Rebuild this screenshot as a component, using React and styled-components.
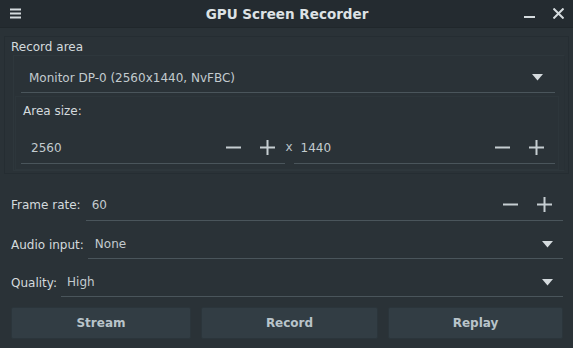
import React from "react"
import styled, { createGlobalStyle } from "styled-components"

const Global = createGlobalStyle`
  html, body {
    margin: 0;
    padding: 0;
    background: #2a3237;
  }
  body {
    font-family: "DejaVu Sans", "Liberation Sans", sans-serif;
  }
`

const Window = styled.div`
  width: 573px;
  height: 348px;
  background: #2a3237;
  color: #d4dadd;
  font-size: 12px;
  overflow: hidden;
  display: flex;
  flex-direction: column;
`

const TitleBar = styled.header`
  height: 28px;
  flex: none;
  background: #242b30;
  border-bottom: 1px solid #20272b;
  box-sizing: border-box;
  display: grid;
  grid-template-columns: 1fr auto 1fr;
  align-items: center;
  padding: 0 9px 0 10px;
`

const Title = styled.h1`
  margin: 0;
  font-size: 13.5px;
  font-weight: bold;
  color: #dde2e5;
`

const TitleButtons = styled.div`
  display: flex;
  justify-content: flex-end;
  align-items: center;
  gap: 18px;
`

const Content = styled.main`
  flex: 1;
  padding: 8px 4px 0 4px;
`

const Group = styled.section`
  border: 1px solid #252d32;
  padding: 3px 3px 2px 6px;
`

const GroupLabel = styled.div`
  height: 15px;
  line-height: 15px;
`

const Inner = styled.div`
  border: 1px solid #2e373c;
  border-right-color: #283035;
  margin-left: 2px;
  padding: 7px 9px 0 7px;
`

const SubFrame = styled.div`
  border: 1px solid #2d363b;
  margin: 3px -4px 0 -6px;
  padding: 6px 3px 5px 5px;
`

const SubLabel = styled.div`
  height: 16px;
  line-height: 16px;
  margin: 0 0 13px 2px;
`

const Field = styled.div`
  flex: 1;
  height: ${(p) => p.$h || 30}px;
  box-sizing: border-box;
  border-bottom: 1px solid #4a555b;
  display: flex;
  align-items: center;
  padding: 0 ${(p) => p.$pr || 10}px 0 ${(p) => p.$pl || 8}px;
  color: #c3cbcf;
`

const Value = styled.span`
  flex: 1;
  white-space: nowrap;
`

const SpinRow = styled.div`
  display: flex;
  align-items: center;
`

const Times = styled.span`
  width: 9px;
  text-align: center;
  color: #b9c2c7;
  margin-top: -3px;
`

const Row = styled.div`
  display: flex;
  align-items: center;
  padding: 0 6px 0 7px;
  margin-top: ${(p) => p.$mt || 0}px;
`

const RowLabel = styled.label`
  white-space: nowrap;
  padding-right: ${(p) => p.$gap || 4}px;
`

const StepButtons = styled.div`
  display: flex;
  align-items: center;
  gap: 19px;
`

const ButtonBar = styled.div`
  display: flex;
  gap: 10px;
  padding: 0 7px;
  margin-top: 10px;
`

const Button = styled.button`
  flex: none;
  width: ${(p) => p.$w}px;
  height: 32px;
  background: #323d44;
  border: 1px solid #2b353b;
  border-radius: 2px;
  color: #b9c4ca;
  font-family: inherit;
  font-size: 12px;
  font-weight: bold;
  padding: 0;
`

const Icon = styled.svg`
  display: block;
  flex: none;
`

const Minus = () => (
  <Icon width="15" height="15" viewBox="0 0 15 15">
    <rect x="0" y="6.5" width="15" height="2" fill="#c6ced2" />
  </Icon>
)

const Plus = () => (
  <Icon width="15" height="15" viewBox="0 0 15 15">
    <rect x="0" y="6.5" width="15" height="2" fill="#c6ced2" />
    <rect x="6.5" y="0" width="2" height="15" fill="#c6ced2" />
  </Icon>
)

const Arrow = () => (
  <Icon width="11" height="7" viewBox="0 0 11 7">
    <path d="M0 0 H11 L5.5 6.5 Z" fill="#d5dbde" />
  </Icon>
)

const Steppers = () => (
  <StepButtons>
    <Minus />
    <Plus />
  </StepButtons>
)

const App = () => {
  return (
    <Window>
      <Global />
      <TitleBar>
        <Icon width="11" height="11" viewBox="0 0 11 11">
          <rect x="0" y="0.5" width="11" height="2" fill="#d5dbde" />
          <rect x="0" y="4.5" width="11" height="2" fill="#d5dbde" />
          <rect x="0" y="8.5" width="11" height="2" fill="#d5dbde" />
        </Icon>
        <Title>GPU Screen Recorder</Title>
        <TitleButtons>
          <Icon width="11" height="11" viewBox="0 0 11 11">
            <rect x="0" y="8" width="11" height="2" fill="#d5dbde" />
          </Icon>
          <Icon width="11" height="11" viewBox="0 0 11 11">
            <path d="M0.5 0.5 L10.5 10.5 M10.5 0.5 L0.5 10.5" stroke="#d5dbde" strokeWidth="2" />
          </Icon>
        </TitleButtons>
      </TitleBar>
      <Content>
        <Group>
          <GroupLabel>Record area</GroupLabel>
          <Inner>
            <Field $h={30} $pr={12}>
              <Value>Monitor DP-0 (2560x1440, NvFBC)</Value>
              <Arrow />
            </Field>
            <SubFrame>
              <SubLabel>Area size:</SubLabel>
              <SpinRow>
                <Field $h={32} $pr={10} $pl={10}>
                  <Value>2560</Value>
                  <Steppers />
                </Field>
                <Times>x</Times>
                <Field $h={32} $pr={11} $pl={7}>
                  <Value>1440</Value>
                  <Steppers />
                </Field>
              </SpinRow>
            </SubFrame>
          </Inner>
        </Group>
        <Row $mt={15}>
          <RowLabel $gap={5}>Frame rate:</RowLabel>
          <Field $h={32} $pr={11} $pl={6}>
            <Value>60</Value>
            <Steppers />
          </Field>
        </Row>
        <Row $mt={9}>
          <RowLabel $gap={4}>Audio input:</RowLabel>
          <Field $h={29} $pr={10} $pl={7}>
            <Value>None</Value>
            <Arrow />
          </Field>
        </Row>
        <Row $mt={9}>
          <RowLabel $gap={4}>Quality:</RowLabel>
          <Field $h={29} $pr={10} $pl={6}>
            <Value>High</Value>
            <Arrow />
          </Field>
        </Row>
        <ButtonBar>
          <Button $w={180}>Stream</Button>
          <Button $w={177}>Record</Button>
          <Button $w={175}>Replay</Button>
        </ButtonBar>
      </Content>
    </Window>
  )
}

export default App
